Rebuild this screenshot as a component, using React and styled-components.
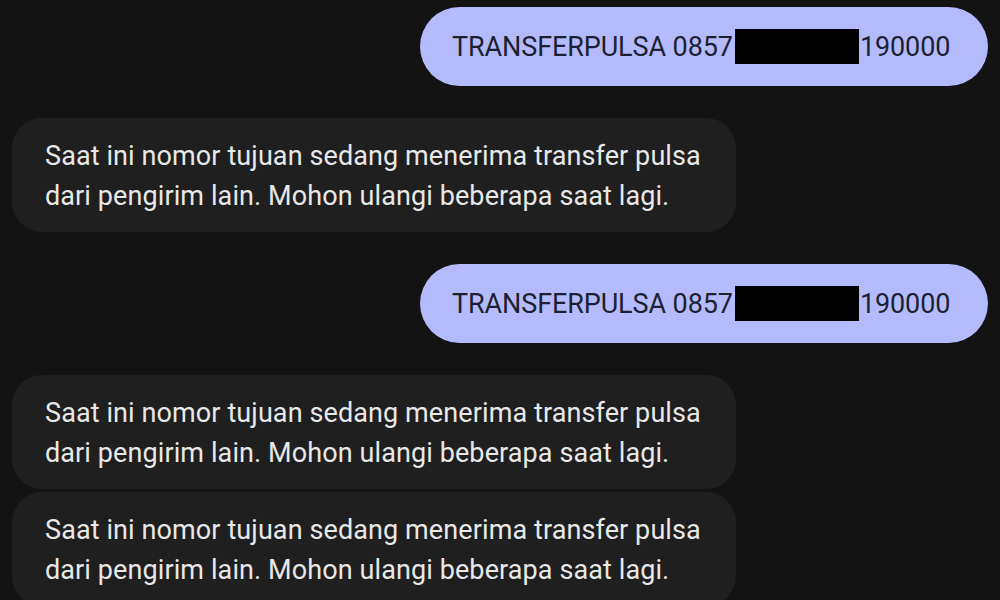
import React from 'react'
import styled, { createGlobalStyle } from 'styled-components'

const GlobalStyle = createGlobalStyle`
  html, body {
    margin: 0;
    padding: 0;
    background: #131313;
  }
  body {
    font-family: Roboto, "Noto Sans", "Liberation Sans", sans-serif;
    -webkit-font-smoothing: antialiased;
  }
`

const Thread = styled.main`
  width: 1000px;
  height: 600px;
  overflow: hidden;
  box-sizing: border-box;
  padding: 7px 12px 0 12px;
  display: flex;
  flex-direction: column;
  background: #131313;
`

const Group = styled.div`
  display: flex;
  flex-direction: column;
  align-items: ${(p) => (p.$mine ? 'flex-end' : 'flex-start')};
  gap: 3px;
  margin-bottom: 32px;
`

const SentBubble = styled.div`
  box-sizing: border-box;
  width: 568px;
  height: 79px;
  border-radius: 40px;
  background: #b4bbfc;
  color: #1d1f33;
  font-size: 27px;
  letter-spacing: -0.1px;
  display: flex;
  align-items: center;
  padding: 0 32px;
  white-space: nowrap;
`

const Redacted = styled.span`
  display: inline-block;
  width: 124px;
  height: 35px;
  background: #000;
  margin: 0 1px 0 2px;
`

const ReceivedBubble = styled.div`
  box-sizing: border-box;
  width: 724px;
  border-radius: 30px;
  background: #1f1f1f;
  color: #e8e8e8;
  font-size: 27px;
  line-height: 40px;
  letter-spacing: 0.1px;
  padding: 18px 20px 16px 33px;
`

const Line = styled.div`
  white-space: nowrap;
`

const reply = [
  'Saat ini nomor tujuan sedang menerima transfer pulsa',
  'dari pengirim lain. Mohon ulangi beberapa saat lagi.',
]

function Sent() {
  return (
    <SentBubble>
      TRANSFERPULSA 0857<Redacted />190000
    </SentBubble>
  )
}

function Received() {
  return (
    <ReceivedBubble>
      {reply.map((l) => (
        <Line key={l}>{l}</Line>
      ))}
    </ReceivedBubble>
  )
}

export default function App() {
  return (
    <>
      <GlobalStyle />
      <Thread>
        <Group $mine>
          <Sent />
        </Group>
        <Group>
          <Received />
        </Group>
        <Group $mine>
          <Sent />
        </Group>
        <Group>
          <Received />
          <Received />
        </Group>
      </Thread>
    </>
  )
}
